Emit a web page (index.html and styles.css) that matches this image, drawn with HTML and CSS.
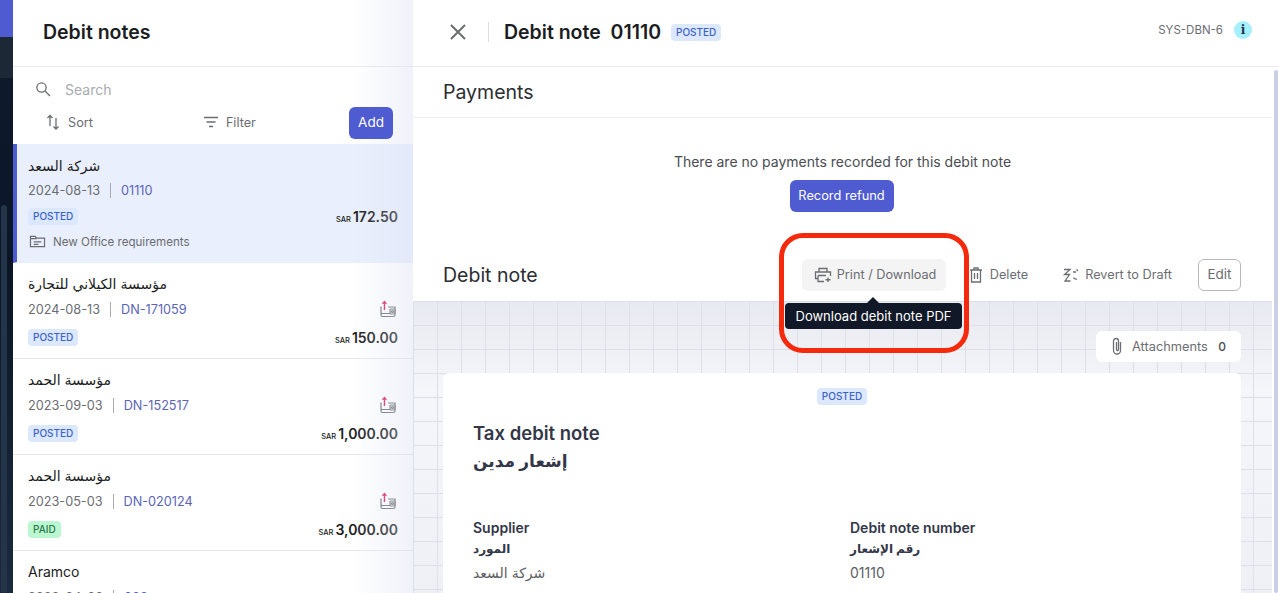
FILE: index.html
```html
<!DOCTYPE html>
<html lang="en">

<head>
    <meta charset="UTF-8">
    <meta name="viewport" content="width=device-width, initial-scale=1.0">
    <title>Debit notes</title>
    <link rel="stylesheet" href="styles.css">
</head>

<body>
    <div class="app">
        <div class="rail">
            <div class="rail-top"></div>
            <div class="rail-item"></div>
            <div class="rail-thumb"></div>
        </div>

        <aside class="list">
            <h1 class="list-title">Debit notes</h1>
            <div class="search">
                <svg class="icon" viewBox="0 0 16 16" width="16" height="16"><circle cx="6.5" cy="6.5" r="4.6" /><path d="M10 10l5 5" /></svg>
                <span>Search</span>
            </div>
            <div class="tools">
                <button class="tool tool-sort">
                    <svg class="icon" viewBox="0 0 16 16" width="16" height="16"><path d="M5 12V1.500M2.500 4L5 1.500 7.500 4M11 4v11M8.500 12.500L11 15l2.500-2.500" /></svg>
                    Sort
                </button>
                <button class="tool tool-filter">
                    <svg class="icon" viewBox="0 0 16 16" width="16" height="16"><path d="M1 3.500h14M3.500 8h9M6 12.500h4" /></svg>
                    Filter
                </button>
                <button class="add">Add</button>
            </div>

            <div class="row row-active">
                <div class="name" dir="rtl">شركة السعد</div>
                <div class="meta"><span>2024-08-13</span><i></i><a>01110</a></div>
                <div class="row-foot">
                    <span class="badge">POSTED</span>
                    <span class="amount"><small>SAR</small>172.50</span>
                </div>
                <div class="project">
                    <svg class="icon" viewBox="0 0 18 16" width="17" height="15"><path d="M1.500 13.500v-11h5l1.500 2h8.500v9zM1.500 5h6.500M5 8.500h8M5 11h5" /></svg>
                    New Office requirements
                </div>
            </div>

            <div class="row">
                <div class="name" dir="rtl">مؤسسة الكيلاني للتجارة</div>
                <div class="meta"><span>2024-08-13</span><i></i><a>DN-171059</a>
                    <svg class="wallet" viewBox="0 0 18 18" width="18" height="18"><path class="wallet-body" d="M2 6.500V15a1.500 1.500 0 0 0 1.500 1.500h11A1.500 1.500 0 0 0 16 15V7h-7M2 13.500h9" /><rect class="wallet-body" x="11" y="9" width="5" height="5" rx="1" /><circle class="wallet-body" cx="13.500" cy="11.500" r="1" /><path class="wallet-arrow" d="M5.500 10V3" /><path class="wallet-tip" d="M5.500 0.500l2.800 3.200H2.700z" /></svg>
                </div>
                <div class="row-foot">
                    <span class="badge">POSTED</span>
                    <span class="amount"><small>SAR</small>150.00</span>
                </div>
            </div>

            <div class="row">
                <div class="name" dir="rtl">مؤسسة الحمد</div>
                <div class="meta"><span>2023-09-03</span><i></i><a>DN-152517</a>
                    <svg class="wallet" viewBox="0 0 18 18" width="18" height="18"><path class="wallet-body" d="M2 6.500V15a1.500 1.500 0 0 0 1.500 1.500h11A1.500 1.500 0 0 0 16 15V7h-7M2 13.500h9" /><rect class="wallet-body" x="11" y="9" width="5" height="5" rx="1" /><circle class="wallet-body" cx="13.500" cy="11.500" r="1" /><path class="wallet-arrow" d="M5.500 10V3" /><path class="wallet-tip" d="M5.500 0.500l2.800 3.200H2.700z" /></svg>
                </div>
                <div class="row-foot">
                    <span class="badge">POSTED</span>
                    <span class="amount"><small>SAR</small>1,000.00</span>
                </div>
            </div>

            <div class="row">
                <div class="name" dir="rtl">مؤسسة الحمد</div>
                <div class="meta"><span>2023-05-03</span><i></i><a>DN-020124</a>
                    <svg class="wallet" viewBox="0 0 18 18" width="18" height="18"><path class="wallet-body" d="M2 6.500V15a1.500 1.500 0 0 0 1.500 1.500h11A1.500 1.500 0 0 0 16 15V7h-7M2 13.500h9" /><rect class="wallet-body" x="11" y="9" width="5" height="5" rx="1" /><circle class="wallet-body" cx="13.500" cy="11.500" r="1" /><path class="wallet-arrow" d="M5.500 10V3" /><path class="wallet-tip" d="M5.500 0.500l2.800 3.200H2.700z" /></svg>
                </div>
                <div class="row-foot">
                    <span class="badge badge-paid">PAID</span>
                    <span class="amount"><small>SAR</small>3,000.00</span>
                </div>
            </div>

            <div class="row">
                <div class="name">Aramco</div>
                <div class="meta"><span>2023-04-03</span><i></i><a>003</a></div>
            </div>
        </aside>

        <main class="detail">
            <header class="detail-head">
                <svg class="close" viewBox="0 0 16 16" width="16" height="16"><path d="M1 1l14 14M15 1L1 15" /></svg>
                <span class="head-sep"></span>
                <h2 class="detail-title">Debit note&nbsp; 01110</h2>
                <span class="badge">POSTED</span>
                <span class="sys-id">SYS-DBN-6</span>
                <span class="info">i</span>
            </header>

            <div class="scroll">
                <h3 class="section-title payments-title">Payments</h3>
                <div class="payments">
                    <p>There are no payments recorded for this debit note</p>
                    <button class="refund">Record refund</button>
                </div>

                <div class="note-bar">
                    <h3 class="section-title">Debit note</h3>
                    <div class="actions">
                        <button class="action action-print">
                            <svg class="icon" viewBox="0 0 18 16" width="18" height="16"><path d="M5 5V1.500h8V5M4 11.500H1.500V5h15v4M4 8.500h8M4 8.500v6h6M14 10.500v4.500M11.500 12.750h5" /></svg>
                            Print / Download
                        </button>
                        <button class="action action-delete">
                            <svg class="icon" viewBox="0 0 14 16" width="14" height="16"><path d="M1 3h12M5 3V1h4v2M2.500 3v12h9V3M5.500 6v6M8.500 6v6" /></svg>
                            Delete
                        </button>
                        <button class="action action-revert">
                            <svg class="icon" viewBox="0 0 18 16" width="18" height="16"><path d="M2 2.500h6L2.500 7.500h5L3 14h5.500M11 5h3M11.500 10.500a3 3 0 0 0 3.500 1.500M14.500 2.500l1.500 1.500" /></svg>
                            Revert to Draft
                        </button>
                        <button class="edit">Edit</button>
                    </div>
                </div>

                <section class="canvas">
                    <div class="attach-line">
                        <div class="attachments">
                            <svg class="icon" viewBox="0 0 12 18" width="12" height="18"><path d="M9.500 5v8.500a3.500 3.500 0 0 1-7 0V4a2.500 2.500 0 0 1 5 0v8.500a1 1 0 0 1-2 0V5" /></svg>
                            <span>Attachments</span>
                            <b>0</b>
                        </div>
                    </div>
                    <article class="sheet">
                        <div class="sheet-status"><span class="badge">POSTED</span></div>
                        <h4 class="sheet-title">Tax debit note</h4>
                        <h4 class="sheet-title sheet-title-ar" dir="rtl">إشعار مدين</h4>
                        <div class="fields">
                            <div>
                                <div class="label">Supplier</div>
                                <div class="label label-ar" dir="rtl">المورد</div>
                                <div class="value" dir="rtl">شركة السعد</div>
                            </div>
                            <div>
                                <div class="label">Debit note number</div>
                                <div class="label label-ar" dir="rtl">رقم الإشعار</div>
                                <div class="value">01110</div>
                            </div>
                        </div>
                    </article>
                </section>
            </div>
        </main>
    </div>

    <div class="tooltip">Download debit note PDF</div>
    <div class="callout"></div>
</body>

</html>
```

FILE: styles.css
```css
* {
    box-sizing: border-box;
}

body {
    font-family: Inter, "DejaVu Sans", sans-serif;
    background-color: #fff;
    color: #1b1d22;
    margin: 0;
    height: 593px;
    overflow: hidden;
}

h1,
h2,
h3,
h4,
p {
    margin: 0;
}

button {
    font-family: inherit;
    border: none;
    background: none;
    cursor: pointer;
    padding: 0 0 2px;
}

.icon {
    fill: none;
    stroke: #6b6d72;
    stroke-width: 1.3;
    flex: none;
}

.app {
    display: flex;
    height: 593px;
    overflow: hidden;
}

.rail {
    width: 13px;
    flex: none;
    background: linear-gradient(#0f1c2e, #0a1626 45%, #1b2a3e);
}

.rail-top {
    height: 37px;
    background-color: #4f5bd0;
}

.rail-item {
    height: 41px;
    background-color: #1c2836;
}

.rail-thumb {
    width: 6px;
    height: 388px;
    margin: 127px 0 0 1px;
    border-radius: 3px;
    background-color: #24354a;
}

.list {
    width: 400px;
    flex: none;
    background-color: #fff;
    position: relative;
    z-index: 1;
    overflow: hidden;
}

.list::after {
    content: "";
    position: absolute;
    top: 0;
    right: 0;
    bottom: 0;
    width: 60px;
    background: linear-gradient(to right, rgba(222, 226, 244, 0), rgba(222, 226, 244, 0.45));
    pointer-events: none;
}

.list-title {
    height: 67px;
    padding: 20px 0 0 30px;
    font-size: 19.5px;
    line-height: 24px;
    font-weight: 600;
    border-bottom: 1px solid #e9eaee;
}

.search {
    display: flex;
    align-items: center;
    gap: 14px;
    height: 20px;
    margin: 12px 0 0 22px;
    font-size: 14px;
    color: #a9abb0;
}

.tools {
    display: flex;
    align-items: center;
    height: 32px;
    margin-top: 8px;
    padding: 0 20px 0 32px;
    margin-bottom: 5px;
}

.tool {
    display: flex;
    align-items: center;
    gap: 7px;
    font-size: 12.7px;
    color: #6b6d72;
}

.tool-filter {
    margin-left: 110px;
}

.add {
    margin-left: auto;
    width: 44px;
    height: 32px;
    border-radius: 6px;
    background-color: #4f5bd0;
    color: #fff;
    font-size: 13.5px;
    position: relative;
    z-index: 1;
}

.row {
    height: 96px;
    padding: 10px 15px 0;
    border-bottom: 1px solid #e6e7ec;
}

.row-active {
    height: 119px;
    padding: 11px 15px 0 11px;
    background-color: #e9effd;
    border-left: 4px solid #4f5bd0;
    border-bottom-color: #e9effd;
}

.name {
    height: 22px;
    line-height: 22px;
    font-size: 14px;
    direction: rtl;
    display: flex;
    justify-content: flex-end;
    color: #1b1d22;
}

.name:not([dir]) {
    direction: ltr;
    justify-content: flex-start;
}

.meta {
    display: flex;
    align-items: center;
    height: 20px;
    margin-top: 4px;
    font-size: 12.7px;
    color: #6b6d72;
}

.row-active .meta {
    margin-top: 3px;
}

.meta i {
    width: 1px;
    height: 15px;
    margin: 0 10px;
    background-color: #a9abb0;
}

.meta a {
    color: #5a64b8;
}

.wallet {
    margin-left: auto;
    margin-right: 1px;
    fill: none;
}

.wallet-body {
    fill: none;
    stroke: #6b6d72;
    stroke-width: 1.2;
}

.wallet-arrow {
    stroke: #d9245e;
    stroke-width: 1.5;
}

.wallet-tip {
    fill: #d9245e;
}

.row-foot {
    display: flex;
    align-items: center;
    justify-content: space-between;
    height: 18px;
    margin-top: 9px;
}

.row-active .row-foot {
    margin-top: 7px;
}

.badge {
    display: inline-block;
    height: 17px;
    line-height: 17px;
    padding: 0 5px;
    border-radius: 4px;
    font-size: 10px;
    font-weight: 500;
    background-color: #dbe8fd;
    color: #3c62c8;
}

.badge-paid {
    background-color: #bbf7d0;
    color: #2a7a4b;
}

.amount {
    font-size: 14px;
    font-weight: 600;
    color: #1b1d22;
}

.amount small {
    font-size: 7.5px;
    font-weight: 500;
    margin-right: 2px;
}

.project {
    display: flex;
    align-items: center;
    gap: 7px;
    margin-top: 9px;
    margin-left: 1px;
    font-size: 11.6px;
    color: #6b6d72;
}

.detail {
    flex: 1;
    min-width: 0;
    display: flex;
    flex-direction: column;
    position: relative;
}

.detail-head {
    height: 67px;
    flex: none;
    display: flex;
    align-items: center;
    padding: 0 26px 3px 37px;
    border-bottom: 1px solid #e9eaee;
}

.detail-head .badge {
    margin-top: 1px;
}

.close {
    fill: none;
    stroke: #6b6d72;
    stroke-width: 2;
}

.head-sep {
    width: 1px;
    height: 20px;
    margin: 0 15px 0 22px;
    background-color: #dcdde1;
}

.detail-title {
    font-size: 19.5px;
    font-weight: 600;
    margin-right: 10px;
}

.sys-id {
    margin-left: auto;
    margin-right: 11px;
    margin-bottom: 4px;
    font-size: 11.5px;
    color: #6b6d72;
}

.info {
    width: 18px;
    height: 18px;
    margin-bottom: 4px;
    border-radius: 50%;
    background-color: #a5f0fc;
    color: #1f3350;
    font-family: "DejaVu Serif", serif;
    font-size: 12px;
    font-weight: 700;
    line-height: 18px;
    text-align: center;
}

.scroll {
    flex: 1;
    min-height: 0;
    margin-right: 6px;
    position: relative;
}

.scroll::after {
    content: "";
    position: absolute;
    top: 3px;
    right: -6px;
    bottom: 0;
    width: 4px;
    border-radius: 2px;
    background-color: #c8cfe6;
}

.section-title {
    font-size: 19.5px;
    font-weight: 400;
    line-height: 24px;
    color: #2b2d33;
}

.payments-title {
    height: 51px;
    padding: 13px 0 0 30px;
    border-bottom: 1px solid #eff0f3;
}

.payments {
    display: flex;
    flex-direction: column;
    align-items: center;
    padding-top: 35px;
}

.payments p {
    font-size: 14px;
    line-height: 18px;
    color: #4a4c52;
}

.refund {
    margin: 9px 2px 0 0;
    width: 104px;
    height: 32px;
    border-radius: 6px;
    background-color: #4f5bd0;
    color: #fff;
    font-size: 12.8px;
}

.note-bar {
    display: flex;
    align-items: center;
    justify-content: space-between;
    height: 32px;
    margin-top: 47px;
    padding: 0 31px 0 30px;
}

.actions {
    display: flex;
    align-items: center;
}

.action {
    display: flex;
    align-items: center;
    gap: 5px;
    height: 32px;
    font-size: 12.7px;
    color: #6b6d72;
    white-space: nowrap;
}

.action .icon {
    margin-top: 2px;
}

.action-print {
    width: 144px;
    padding-left: 12px;
    border-radius: 6px;
    background-color: #f4f4f5;
}

.action-delete {
    margin-left: 23px;
    gap: 7px;
}

.action-revert {
    margin-left: 34px;
}

.edit {
    margin-left: 26px;
    width: 43px;
    height: 32px;
    border: 1px solid #b7b9be;
    border-radius: 6px;
    color: #6b6d72;
    font-size: 13.5px;
}

.canvas {
    margin-top: 10px;
    height: 292px;
    padding: 29px 31px 0 30px;
    border-top: 1px solid #dcdfe8;
    background-color: #eef0f6;
    background-image:
        linear-gradient(#dde0e9 1px, transparent 1px),
        linear-gradient(to right, #dde0e9 1px, transparent 1px),
        linear-gradient(#e8eaf1, #f5f6fa 90px, #eef0f6);
    background-size: 24px 24px, 24px 24px, 100% 100%;
    background-position: 0 23px, 24px 0, 0 0;
}

.attach-line {
    display: flex;
    justify-content: flex-end;
}

.attachments {
    display: flex;
    align-items: center;
    width: 145px;
    height: 31px;
    padding: 0 15px 1px;
    border-radius: 6px;
    background-color: #fff;
    font-size: 12.8px;
    color: #6b6d72;
}

.attachments span {
    margin-left: 9px;
}

.attachments b {
    margin-left: auto;
    font-size: 12px;
    font-weight: 500;
    color: #4a4c52;
}

.sheet {
    margin-top: 11px;
    height: 260px;
    padding: 15px 30px 0;
    border-radius: 6px 6px 0 0;
    background-color: #fff;
}

.sheet-status {
    display: flex;
    justify-content: center;
    height: 17px;
}

.sheet-title {
    margin-top: 16px;
    font-size: 18.5px;
    line-height: 24px;
    font-weight: 600;
    color: #333748;
}

.sheet-title-ar {
    margin-top: 4px;
    display: flex;
    justify-content: flex-end;
    font-size: 17px;
}

.fields {
    display: grid;
    grid-template-columns: 377px 1fr;
    margin-top: 44px;
}

.label {
    font-size: 14px;
    line-height: 21px;
    font-weight: 600;
    color: #333748;
}

.label-ar {
    font-size: 12px;
}

.label-ar,
.value[dir="rtl"] {
    display: flex;
    justify-content: flex-end;
}

.value {
    margin-top: 2px;
    font-size: 14px;
    line-height: 24px;
    color: #5c5e64;
}

.tooltip {
    position: absolute;
    left: 785px;
    top: 303px;
    width: 177px;
    height: 26px;
    line-height: 26px;
    text-align: center;
    border-radius: 4px;
    background-color: #111827;
    color: #fff;
    font-size: 13px;
    z-index: 2;
}

.tooltip::before {
    content: "";
    position: absolute;
    left: 82px;
    top: -6px;
    border-left: 6px solid transparent;
    border-right: 6px solid transparent;
    border-bottom: 6px solid #111827;
}

.callout {
    position: absolute;
    left: 779px;
    top: 233px;
    width: 190px;
    height: 120px;
    border: 5px solid #f52a0c;
    border-radius: 24px;
    z-index: 3;
}
```
